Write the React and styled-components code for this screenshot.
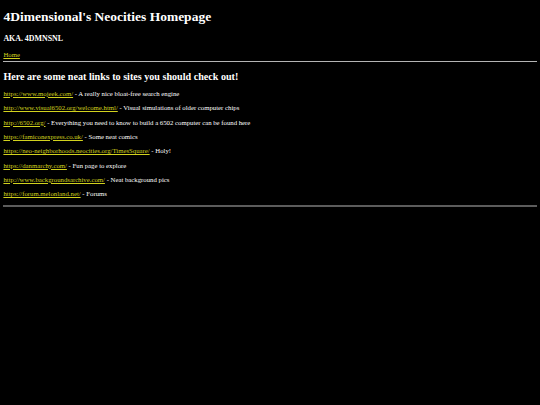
import styled, { createGlobalStyle } from "styled-components";

const GlobalStyle = createGlobalStyle`
  html, body {
    background: #000;
  }
  body {
    margin: 0;
    font-family: "Liberation Serif", "Times New Roman", serif;
    color: #fff;
  }
`;

const Page = styled.div`
  padding: 9px 3.4px 0;
  font-size: 6.75px;
  line-height: normal;
`;

const Title = styled.h1`
  font-size: 13.5px;
  font-weight: bold;
  margin: 0 0 9px;
`;

const Subtitle = styled.h3`
  font-size: 7.9px;
  font-weight: bold;
  margin: 0 0 7.9px;
`;

const Nav = styled.div`
  margin: 0;
`;

const Link = styled.a`
  color: #d2d21e;
  text-decoration: underline;
`;

const Rule = styled.hr`
  border: none;
  margin: 3.4px 0;
  height: ${(props) => (props.thick ? "2px" : "1px")};
  background: ${(props) => (props.thick ? "#5c5c5c" : "#b4b4b4")};
`;

const Heading = styled.h2`
  font-size: 10.125px;
  font-weight: bold;
  margin: 8.4px 0 8.2px;
`;

const Item = styled.p`
  margin: 6.75px 0;
  line-height: 7.6px;
`;

const sites = [
  { href: "https://www.mojeek.com/", note: "A really nice bloat-free search engine" },
  { href: "http://www.visual6502.org/welcome.html/", note: "Visual simulations of older computer chips" },
  { href: "http://6502.org/", note: "Everything you need to know to build a 6502 computer can be found here" },
  { href: "https://famiconexpress.co.uk/", note: "Some neat comics" },
  { href: "https://neo-neighborhoods.neocities.org/TimesSquare/", note: "Holy!" },
  { href: "https://danmarchy.com/", note: "Fun page to explore" },
  { href: "http://www.backgroundsarchive.com/", note: "Neat background pics" },
  { href: "https://forum.melonland.net/", note: "Forums" },
];

export default function App() {
  return (
    <>
      <GlobalStyle />
      <Page>
        <Title>4Dimensional's Neocities Homepage</Title>
        <Subtitle>AKA. 4DMNSNL</Subtitle>
        <Nav>
          <Link href="#">Home</Link>
        </Nav>
        <Rule />
        <Heading>Here are some neat links to sites you should check out!</Heading>
        {sites.map((site) => (
          <Item key={site.href}>
            <Link href={site.href}>{site.href}</Link> - {site.note}
          </Item>
        ))}
        <Rule thick />
      </Page>
    </>
  );
}
